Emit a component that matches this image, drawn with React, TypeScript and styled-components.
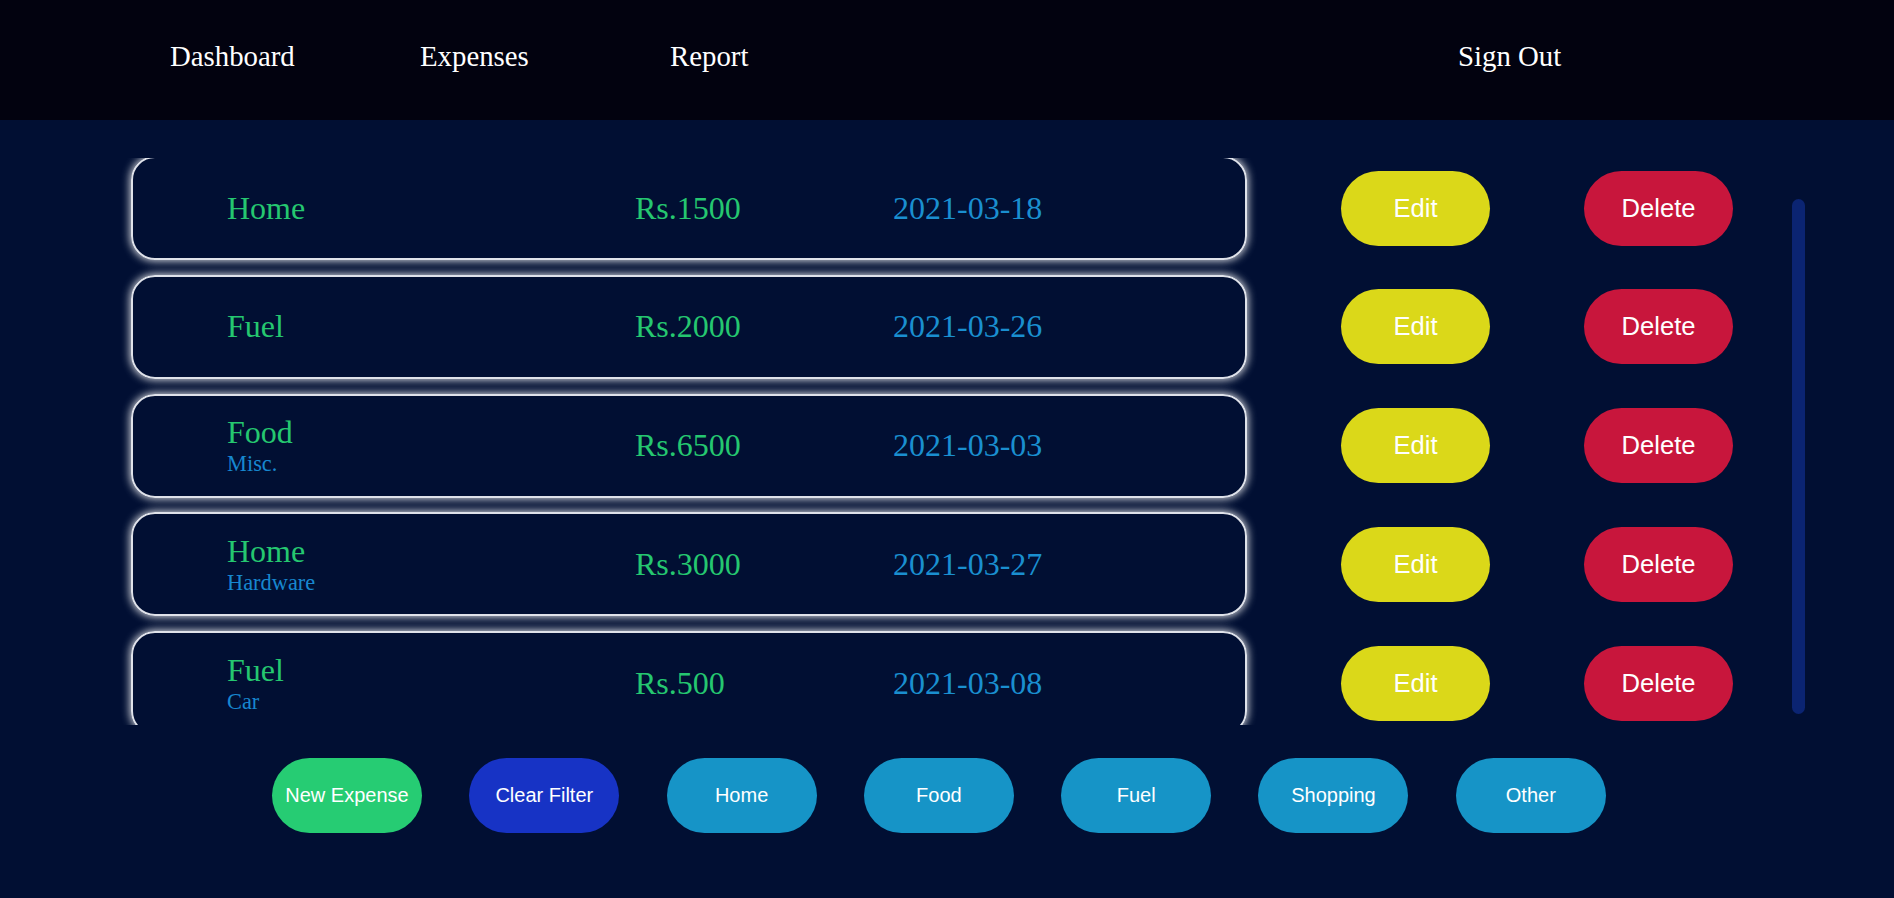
import * as React from "react";
import styled, { createGlobalStyle } from "styled-components";

const GlobalStyle = createGlobalStyle`
    html, body {
        margin: 0;
        padding: 0;
        height: 100%;
    }
    body {
        background-color: #010f33;
        font-family: "Liberation Serif", "Times New Roman", serif;
    }
    * {
        box-sizing: border-box;
    }
`;

const Page = styled.div`
    display: flex;
    flex-direction: column;
    min-height: 898px;
    background-color: #010f33;
`;

const Header = styled.header`
    display: flex;
    align-items: flex-start;
    height: 120px;
    padding: 40px 0 0 170px;
    background-color: #02020f;
`;

const NavLink = styled.a<{ $push?: number }>`
    display: block;
    width: ${p => (p.$push ? "auto" : "250px")};
    margin-left: ${p => p.$push || 0}px;
    color: #ffffff;
    font-size: 28.8px;
    text-decoration: none;
    cursor: pointer;
`;

const Main = styled.div`
    display: flex;
    margin-top: 38px;
    height: 567px;
`;

const List = styled.div`
    width: 1792px;
    height: 100%;
    padding: 45px 0 8px 131px;
    overflow-y: scroll;
    display: flex;
    flex-direction: column;
    gap: 14.75px;
    scrollbar-width: none;

    &::-webkit-scrollbar {
        display: none;
    }
`;

const Rail = styled.div`
    width: 13px;
    padding-top: 41px;
`;

const Thumb = styled.div`
    width: 13px;
    height: 515px;
    border-radius: 7px;
    background-color: #0b2472;
`;

const Row = styled.div`
    display: flex;
    align-items: center;
    flex: 0 0 104px;
`;

const Card = styled.div`
    display: grid;
    grid-template-columns: 408px 258px 1fr;
    align-items: center;
    width: 1116px;
    height: 104px;
    padding-left: 94px;
    border: 2px solid #dfe2ea;
    border-radius: 24px;
    box-shadow: 0 0 9px 1px rgba(255, 255, 255, 0.85);
`;

const Category = styled.div`
    display: flex;
    flex-direction: column;
`;

const Title = styled.span`
    color: #25c770;
    font-size: 32px;
`;

const Sub = styled.span`
    color: #1787cf;
    font-size: 22.4px;
`;

const Amount = styled.span`
    color: #25c770;
    font-size: 32px;
`;

const DateText = styled.span`
    color: #1a8fd0;
    font-size: 32px;
`;

const Pill = styled.button<{ $bg: string; $size?: number }>`
    flex: 0 0 auto;
    width: 149px;
    height: 75px;
    border: none;
    border-radius: 40px;
    background-color: ${p => p.$bg};
    color: #ffffff;
    font-family: "Liberation Sans", Arial, sans-serif;
    font-size: ${p => p.$size || 20}px;
    cursor: pointer;
    padding: 0;
`;

const RowButton = styled(Pill)`
    margin-left: 94px;
`;

const Filters = styled.div`
    display: flex;
    gap: 47.3px;
    margin-top: 33px;
    padding-left: 272px;

    & > button {
        width: 150px;
    }
`;

type Expense = {
    category: string;
    note?: string;
    amount: number;
    date: string;
};

const expenses: Expense[] = [
    { category: "Home", amount: 1500, date: "2021-03-18" },
    { category: "Fuel", amount: 2000, date: "2021-03-26" },
    { category: "Food", note: "Misc.", amount: 6500, date: "2021-03-03" },
    { category: "Home", note: "Hardware", amount: 3000, date: "2021-03-27" },
    { category: "Fuel", note: "Car", amount: 500, date: "2021-03-08" },
];

const categories = ["Home", "Food", "Fuel", "Shopping", "Other"];

export default function App() {
    const listRef = React.useRef<HTMLDivElement>(null);

    React.useLayoutEffect(() => {
        if (listRef.current) listRef.current.scrollTop = 47;
    }, []);

    return (
        <Page>
            <GlobalStyle />
            <Header>
                <NavLink>Dashboard</NavLink>
                <NavLink>Expenses</NavLink>
                <NavLink>Report</NavLink>
                <NavLink $push={538}>Sign Out</NavLink>
            </Header>
            <Main>
                <List ref={listRef}>
                    {expenses.map((e, i) => (
                        <Row key={i}>
                            <Card>
                                <Category>
                                    <Title>{e.category}</Title>
                                    {e.note && <Sub>{e.note}</Sub>}
                                </Category>
                                <Amount>Rs.{e.amount}</Amount>
                                <DateText>{e.date}</DateText>
                            </Card>
                            <RowButton $bg="#dbd819" $size={25.6}>Edit</RowButton>
                            <RowButton $bg="#c8163c" $size={25.6}>Delete</RowButton>
                        </Row>
                    ))}
                </List>
                <Rail>
                    <Thumb />
                </Rail>
            </Main>
            <Filters>
                <Pill $bg="#26cc73">New Expense</Pill>
                <Pill $bg="#1733c5">Clear Filter</Pill>
                {categories.map(c => (
                    <Pill key={c} $bg="#1694c7">{c}</Pill>
                ))}
            </Filters>
        </Page>
    );
}
